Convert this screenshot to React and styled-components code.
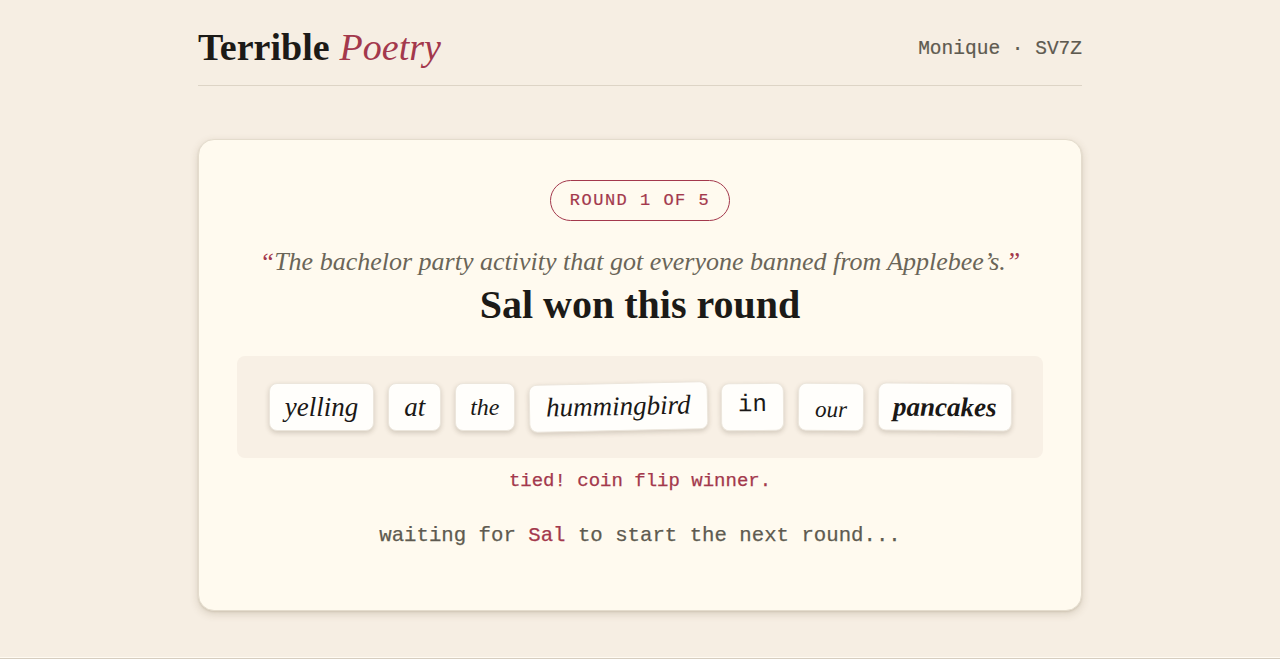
import React from "react";
import styled, { createGlobalStyle } from "styled-components";

const Global = createGlobalStyle`
  html, body { margin: 0; padding: 0; background: #f6eee3; }
  body { font-family: "Liberation Serif", serif; color: #1c1a17; overflow: hidden; }
`;

const mono = `"Liberation Mono", "DejaVu Sans Mono", monospace`;
const serif = `"Liberation Serif", "DejaVu Serif", serif`;
const red = "#a3384c";

const Page = styled.div`
  width: 884px;
  margin: 0 auto;
`;

const Header = styled.header`
  display: flex;
  align-items: center;
  justify-content: space-between;
  height: 86px;
  padding-top: 9px;
  box-sizing: border-box;
  border-bottom: 1px solid #ddd4c6;
`;

const Logo = styled.h1`
  margin: 0;
  font-family: ${serif};
  font-weight: 700;
  font-size: 38px;
  color: #1c1a17;
  em {
    font-weight: 400;
    font-style: italic;
    color: ${red};
    margin-left: 10px;
  }
`;

const Who = styled.div`
  font-family: ${mono};
  font-size: 19.5px;
  color: #5e5a50;
  margin-top: 4px;
  -webkit-text-stroke: 0.2px #5e5a50;
`;

const Card = styled.main`
  margin-top: 53px;
  background: #fffaef;
  border: 1px solid #e4dccd;
  border-radius: 16px;
  box-shadow: 0 3px 8px rgba(90, 70, 40, 0.18), 0 1px 2px rgba(90, 70, 40, 0.12);
  padding: 40px 38px 58px;
  display: flex;
  flex-direction: column;
  align-items: center;
  height: 472px;
  box-sizing: border-box;
`;

const Badge = styled.div`
  height: 41px;
  box-sizing: border-box;
  padding: 0 19px;
  display: flex;
  align-items: center;
  border: 1.5px solid ${red};
  border-radius: 21px;
  font-family: ${mono};
  font-size: 17px;
  letter-spacing: 1.5px;
  color: ${red};
  -webkit-text-stroke: 0.2px ${red};
`;

const Prompt = styled.p`
  margin: 26px 0 0;
  font-family: ${serif};
  font-style: italic;
  font-size: 26px;
  line-height: 30px;
  color: #6a6558;
  span { color: ${red}; }
`;

const Winner = styled.h2`
  margin: 4px 0 0;
  font-family: ${serif};
  font-weight: 700;
  font-size: 40px;
  line-height: 48px;
  color: #1c1a17;
`;

const Board = styled.div`
  align-self: stretch;
  margin-top: 27px;
  height: 102px;
  background: #f8f0e5;
  border-radius: 8px;
  display: flex;
  align-items: center;
  justify-content: center;
  gap: 14px;
`;

const Tile = styled.div`
  height: 48px;
  box-sizing: border-box;
  padding: 0 ${(p) => p.$pad || 15}px;
  display: flex;
  align-items: center;
  background: #fffefb;
  border: 1px solid #ece6dc;
  border-radius: 8px;
  box-shadow: 0 2px 5px rgba(60, 45, 25, 0.2);
  transform: rotate(${(p) => p.$rot || 0}deg);
  font-family: ${(p) => (p.$mono ? mono : serif)};
  font-style: ${(p) => (p.$mono ? "normal" : "italic")};
  font-weight: ${(p) => (p.$bold ? 700 : 400)};
  font-size: ${(p) => p.$size || 27}px;
  color: #1a1816;
  span { transform: translateY(${(p) => p.$dy || 0}px); }
`;

const Tied = styled.div`
  margin-top: 12px;
  font-family: ${mono};
  font-size: 19px;
  color: ${red};
  -webkit-text-stroke: 0.25px ${red};
`;

const Waiting = styled.div`
  margin-top: 32px;
  font-family: ${mono};
  font-size: 20.7px;
  color: #5e5a50;
  -webkit-text-stroke: 0.25px #5e5a50;
  b { font-weight: 400; color: ${red}; -webkit-text-stroke: 0.25px ${red}; }
`;

const Footer = styled.footer`
  margin-top: 46px;
  height: 0;
  border-top: 1px solid #fffaf2;
  border-bottom: 1px solid #d6cdbf;
`;

const words = [
  { t: "yelling", size: 27, pad: 15 },
  { t: "at", size: 27, pad: 15 },
  { t: "the", size: 24, pad: 14 },
  { t: "hummingbird", size: 27, pad: 16, rot: -1.2, dy: -1 },
  { t: "in", mono: true, size: 24, pad: 16, rot: -0.5, dy: -3 },
  { t: "our", size: 23, pad: 16, rot: 0.6, dy: 3 },
  { t: "pancakes", size: 27, pad: 14, bold: true, rot: 0.5 },
];

export default function App() {
  return (
    <>
      <Global />
      <Page>
        <Header>
          <Logo>
            Terrible<em>Poetry</em>
          </Logo>
          <Who>Monique · SV7Z</Who>
        </Header>
        <Card>
          <Badge>ROUND 1 OF 5</Badge>
          <Prompt>
            <span>“</span>The bachelor party activity that got everyone banned from Applebee’s.<span>”</span>
          </Prompt>
          <Winner>Sal won this round</Winner>
          <Board>
            {words.map((w) => (
              <Tile
                key={w.t}
                $size={w.size}
                $pad={w.pad}
                $bold={w.bold}
                $mono={w.mono}
                $rot={w.rot}
                $dy={w.dy}
              >
                <span>{w.t}</span>
              </Tile>
            ))}
          </Board>
          <Tied>tied! coin flip winner.</Tied>
          <Waiting>
            waiting for <b>Sal</b> to start the next round...
          </Waiting>
        </Card>
      </Page>
      <Footer />
    </>
  );
}
